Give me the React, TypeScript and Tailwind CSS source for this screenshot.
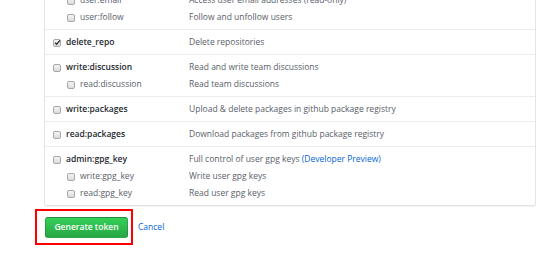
import React from "react"

type Line = {
    name: string
    desc: React.ReactNode
    sub?: boolean
    checked?: boolean
}

const groups: Line[][] = [
    [
        { name: "user:email", desc: "Access user email addresses (read-only)", sub: true },
        { name: "user:follow", desc: "Follow and unfollow users", sub: true },
    ],
    [{ name: "delete_repo", desc: "Delete repositories", checked: true }],
    [
        { name: "write:discussion", desc: "Read and write team discussions" },
        { name: "read:discussion", desc: "Read team discussions", sub: true },
    ],
    [{ name: "write:packages", desc: "Upload & delete packages in github package registry" }],
    [{ name: "read:packages", desc: "Download packages from github package registry" }],
    [
        {
            name: "admin:gpg_key",
            desc: (
                <>
                    Full control of user gpg keys <span className="text-[#0366d6]">(Developer Preview)</span>
                </>
            ),
        },
        { name: "write:gpg_key", desc: "Write user gpg keys", sub: true },
        { name: "read:gpg_key", desc: "Read user gpg keys", sub: true },
    ],
]

function Checkbox({ checked }: { checked?: boolean }) {
    return (
        <span className="relative flex h-[8px] w-[8px] shrink-0 items-center justify-center rounded-[2px] border border-[#a8a8a8] bg-gradient-to-b from-[#f4f4f4] to-[#dcdcdc]">
            {checked && (
                <svg viewBox="0 0 8 8" className="absolute h-[7px] w-[7px]">
                    <path d="M1.2 4.2 L3.1 6 L6.8 1.6" fill="none" stroke="#333" strokeWidth="1.5" />
                </svg>
            )}
        </span>
    )
}

export default function App() {
    return (
        <div
            className="h-[272px] w-[554px] overflow-hidden bg-white text-[8.5px]"
            style={{ fontFamily: '"Open Sans", "Noto Sans", sans-serif' }}
        >
            {/* Scopes box */}
            <div className="-mt-[13px] ml-[44px] w-[492px] rounded-[2px] border border-[#e1e4e8] shadow-[0_1px_1px_rgba(0,0,0,0.06)]">
                {groups.map((g, i) => (
                    <div key={i} className={`pt-[4px] pb-[3px] pl-[8px] ${i > 0 ? "border-t border-[#eaecef]" : ""}`}>
                        {g.map(line => (
                            <div key={line.name} className="flex h-[17px] items-center">
                                <div className={`flex w-[136px] items-center gap-[5px] ${line.sub ? "pl-[14px]" : ""}`}>
                                    <Checkbox checked={line.checked} />
                                    <span className={line.sub ? "text-[#586069]" : "font-semibold text-[#24292e]"}>
                                        {line.name}
                                    </span>
                                </div>
                                <div className="text-[#586069]">{line.desc}</div>
                            </div>
                        ))}
                    </div>
                ))}
            </div>

            {/* Actions */}
            <div className="mt-[3px] ml-[35px] flex items-center gap-[5px]">
                <div className="border-2 border-[#ff0000] pt-[6px] pr-[3px] pb-[5px] pl-[8px]">
                    <button className="flex h-[21px] w-[83px] items-center justify-center rounded-[3px] border border-[rgba(27,31,35,0.2)] bg-gradient-to-b from-[#34d058] to-[#28a745] text-[8.5px] font-semibold text-white">
                        Generate token
                    </button>
                </div>
                <a className="text-[8.5px] text-[#0366d6]">Cancel</a>
            </div>
        </div>
    )
}
